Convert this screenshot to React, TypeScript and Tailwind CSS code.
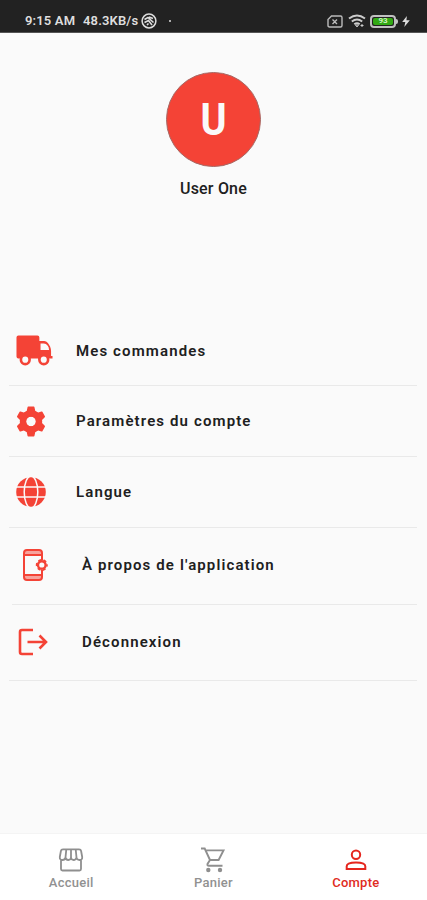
import React from "react";

const TruckIcon = () => (
  <svg width="37" height="31" viewBox="0 0 38 31" preserveAspectRatio="none" fill="#f44336">
    <path fillRule="evenodd" d="M2.5 0.5H22Q24 .5 24 2.5V6H29Q31 6 32.8 8L35 11.5Q36 14 36 16V21H37.5V23.5H33.6A5.7 5.7 0 0 1 22.6 23.5H15A5.7 5.7 0 0 1 4 23.5H2.5Q.5 23.5 .5 21.5V2.5Q.5 .5 2.5 .5ZM25.2 8.5V15H34Q33.5 9 28.5 8.5Z" />
    <circle cx="9.5" cy="24.7" r="5.8" />
    <circle cx="28.5" cy="24.7" r="5.8" />
    <circle cx="9.5" cy="24.7" r="3.1" fill="#fafafa" />
    <circle cx="28.5" cy="24.7" r="3.1" fill="#fafafa" />
  </svg>
);

const GearIcon = () => (
  <svg width="30" height="31" viewBox="0 0 30 31" fill="none" stroke="#f44336">
    <circle cx="15" cy="15.5" r="8" strokeWidth="6.4" />
    <path
      fill="#f44336"
      fillRule="evenodd"
      strokeWidth="1.6"
      strokeLinejoin="round"
      d="M12.3 1.4H17.7L18.6 5.6L21.6 7.4L25.7 6.2L28.2 10.6L25.2 13.6V17.4L28.2 20.4L25.7 24.8L21.6 23.6L18.6 25.4L17.7 29.6H12.3L11.4 25.4L8.4 23.6L4.3 24.8L1.8 20.4L4.8 17.4V13.6L1.8 10.6L4.3 6.2L8.4 7.4L11.4 5.6ZM15 9.7A5.8 5.8 0 1 0 15 21.3A5.8 5.8 0 1 0 15 9.7Z"
    />
  </svg>
);

const GlobeIcon = () => (
  <svg width="30" height="30" viewBox="0 0 30 30">
    <circle cx="15" cy="15" r="14.8" fill="#f44336" />
    <g fill="none" stroke="#fafafa" strokeWidth="1.5">
      <ellipse cx="15" cy="15" rx="6.8" ry="16" />
      <path d="M0 10H30M0 20H30" />
    </g>
  </svg>
);

const PhoneIcon = () => (
  <svg width="26" height="34" viewBox="0 0 26 34" fill="none" stroke="#f44336">
    <path d="M2 5Q2 2 5 2H17Q20 2 20 5V7H2ZM2 27H20V29Q20 32 17 32H5Q2 32 2 29Z" fill="#f44336" fillOpacity=".48" stroke="none" />
    <path strokeWidth="2" d="M20 12V5Q20 2 17 2H5Q2 2 2 5V29Q2 32 5 32H17Q20 32 20 29V22M2 7H20M2 27H20" />
    <circle cx="19.8" cy="17" r="3.8" strokeWidth="2.4" />
    <circle cx="19.8" cy="17" r="5.2" strokeWidth="1.6" strokeDasharray="3 2.445" strokeDashoffset="1.5" />
  </svg>
);

const LogoutIcon = () => (
  <svg width="30" height="28" viewBox="0 0 30 28" fill="none" stroke="#f44336" strokeWidth="2.6">
    <path d="M15 2H4Q2 2 2 4V24Q2 26 4 26H15M9.5 14H28M21.5 7.5L28 14L21.5 20.5" />
  </svg>
);

const StoreIcon = () => (
  <svg width="26" height="24" viewBox="0 0 26 24" fill="none" stroke="#8f8f8f" strokeWidth="1.8">
    <path d="M3 12V21Q3 22.5 4.5 22.5H21.5Q23 22.5 23 21V12M5 1.4H21Q22.8 1.4 23.1 3L24.2 9Q24.5 12 21.5 12Q18.8 12 18.5 9.5Q17.8 12 15.7 12Q13.2 12 13 9.5Q12.8 12 10.3 12Q8 12 7.5 9.5Q7 12 4.5 12Q1.5 12 1.8 9L2.9 3Q3.2 1.4 5 1.4ZM8.3 1.4L7.5 9.5M13 1.4V9.5M17.7 1.4L18.5 9.5" />
  </svg>
);

const CartIcon = () => (
  <svg width="26" height="26" viewBox="0 0 26 26" fill="none" stroke="#8f8f8f" strokeWidth="1.9">
    <path d="M1 1.5H4.7L10 13H18.6L23.5 3.4H5.6M10 13L7.5 17Q7 18.7 9 18.7H22.5" />
    <circle cx="8.3" cy="23" r="2.2" fill="#8f8f8f" stroke="none" />
    <circle cx="20" cy="23" r="2.2" fill="#8f8f8f" stroke="none" />
  </svg>
);

const PersonIcon = () => (
  <svg width="22" height="22" viewBox="0 0 22 22" fill="none" stroke="#e5261e" strokeWidth="2">
    <circle cx="11" cy="5.8" r="4.2" />
    <path d="M1.7 20V17.3C1.7 12.2 20.3 12.2 20.3 17.3V20Z" />
  </svg>
);

const rows = [
  { label: "Mes commandes", Icon: TruckIcon, box: "h-[70px] ml-[9px] pl-[7px]", slot: "w-[60px]" },
  { label: "Paramètres du compte", Icon: GearIcon, box: "h-[71px] ml-[9px] pl-[7px]", slot: "w-[60px]" },
  { label: "Langue", Icon: GlobeIcon, box: "h-[71px] ml-[9px] pl-[7px]", slot: "w-[60px]" },
  { label: "À propos de l'application", Icon: PhoneIcon, box: "h-[77px] ml-[12px] pb-[2px] pl-[10px]", slot: "w-[60px]" },
  { label: "Déconnexion", Icon: LogoutIcon, box: "h-[76px] ml-[9px] pb-[2px] pl-[9px]", slot: "w-[64px]" },
];

const tabs = [
  { label: "Accueil", Icon: StoreIcon, color: "text-[#919191]" },
  { label: "Panier", Icon: CartIcon, color: "text-[#919191]" },
  { label: "Compte", Icon: PersonIcon, color: "text-[#e02b22]" },
];

function StatusBar() {
  return (
    <header className="flex h-[33px] shrink-0 items-center border-b border-[#555] bg-[#222] pt-[10px] pr-[17px] pl-[25px] text-[13px] font-semibold text-[#dedede]">
      <span className="w-[58px] whitespace-nowrap tracking-[0.15px]">9:15 AM</span>
      <span className="w-[58px] whitespace-nowrap tracking-[0.15px]">48.3KB/s</span>
      <svg width="16" height="16" viewBox="0 0 16 16" fill="none" stroke="#ddd">
        <circle cx="8" cy="8" r="6.9" strokeWidth="1.5" />
        <path strokeWidth="1.6" d="M3.5 6.5L7 4.5L12.5 9.5M3.5 9.5L7.5 7.5L11 12M6 12L7.5 10.5M8 4L12 5.5" />
      </svg>
      <span className="ml-[12px] size-[2px] rounded-full bg-[#ddd]" />
      <div className="ml-auto flex items-center">
        <svg width="16" height="13" viewBox="0 0 16 13" fill="none" stroke="#bbb" strokeWidth="1.4">
          <path d="M4.5 1H13.5Q15 1 15 2.5V10.5Q15 12 13.5 12H2.5Q1 12 1 10.5V4.5ZM5.5 4.5L10 9M10 4.5L5.5 9" />
        </svg>
        <svg className="ml-[5px]" width="18" height="14" viewBox="0 0 18 14" fill="none" stroke="#ccc" strokeWidth="2">
          <path d="M1 4.5Q9-1.5 17 4.5M3.8 7.5Q9 3.5 14.2 7.5M6.3 10.2Q9 8.2 11.7 10.2" />
          <path d="M7.5 11L9 13L10.5 11ZM14 10V13M12.5 11.5H15.5" strokeWidth="1" />
        </svg>
        <div className="ml-[4px] flex h-[13px] w-[26px] items-center justify-center rounded-[4px] border-2 border-[#c0c0c0] p-[1px]">
          <div className="flex h-full w-full items-center justify-center rounded-[2px] bg-[#32a914] text-[8px] leading-[8px] text-[#d9f5cd]">93</div>
        </div>
        <span className="h-[5px] w-[2px] rounded-r bg-[#c5c5c5]" />
        <svg className="ml-[4px]" width="8" height="11" viewBox="0 0 9 13" fill="#ddd"><path d="M5.5 0L0 7H3.7L2.5 13L9 5H5Z" /></svg>
      </div>
    </header>
  );
}

export default function App() {
  return (
    <div className="flex h-[900px] w-[427px] flex-col overflow-hidden bg-[#fafafa] font-[Roboto,'Liberation_Sans',sans-serif] text-[#202020]">
      <StatusBar />
      <section className="flex h-[283px] shrink-0 flex-col items-center pt-[39px]">
        <div className="flex size-[95px] items-center justify-center rounded-full border border-[#a56a66] bg-[#f44336] text-[44px] leading-none font-bold text-[#fafafa]">
          <span className="scale-x-90">U</span>
        </div>
        <h1 className="mt-[12px] text-[16px] leading-[20px] font-medium tracking-[0.2px]">User One</h1>
      </section>
      <main className="flex-1">
        {rows.map(({ label, Icon, box, slot }) => (
          <div key={label} className={`mr-[10px] flex items-center border-b border-[#e9e9e9] ${box}`}>
            <div className={`shrink-0 ${slot}`}><Icon /></div>
            <span className="text-[15px] leading-[20px] font-semibold tracking-[1.12px] whitespace-nowrap">{label}</span>
          </div>
        ))}
      </main>
      <nav className="grid h-[67px] shrink-0 grid-cols-3 border-t border-[#f4f4f4] bg-white">
        {tabs.map(({ label, Icon, color }) => (
          <div key={label} className={`flex flex-col items-center pt-[12px] ${color}`}>
            <div className="flex h-[27px] items-center justify-center"><Icon /></div>
            <span className="mt-[2px] text-[13px] leading-[16px] font-medium tracking-[0.25px]">{label}</span>
          </div>
        ))}
      </nav>
    </div>
  );
}
